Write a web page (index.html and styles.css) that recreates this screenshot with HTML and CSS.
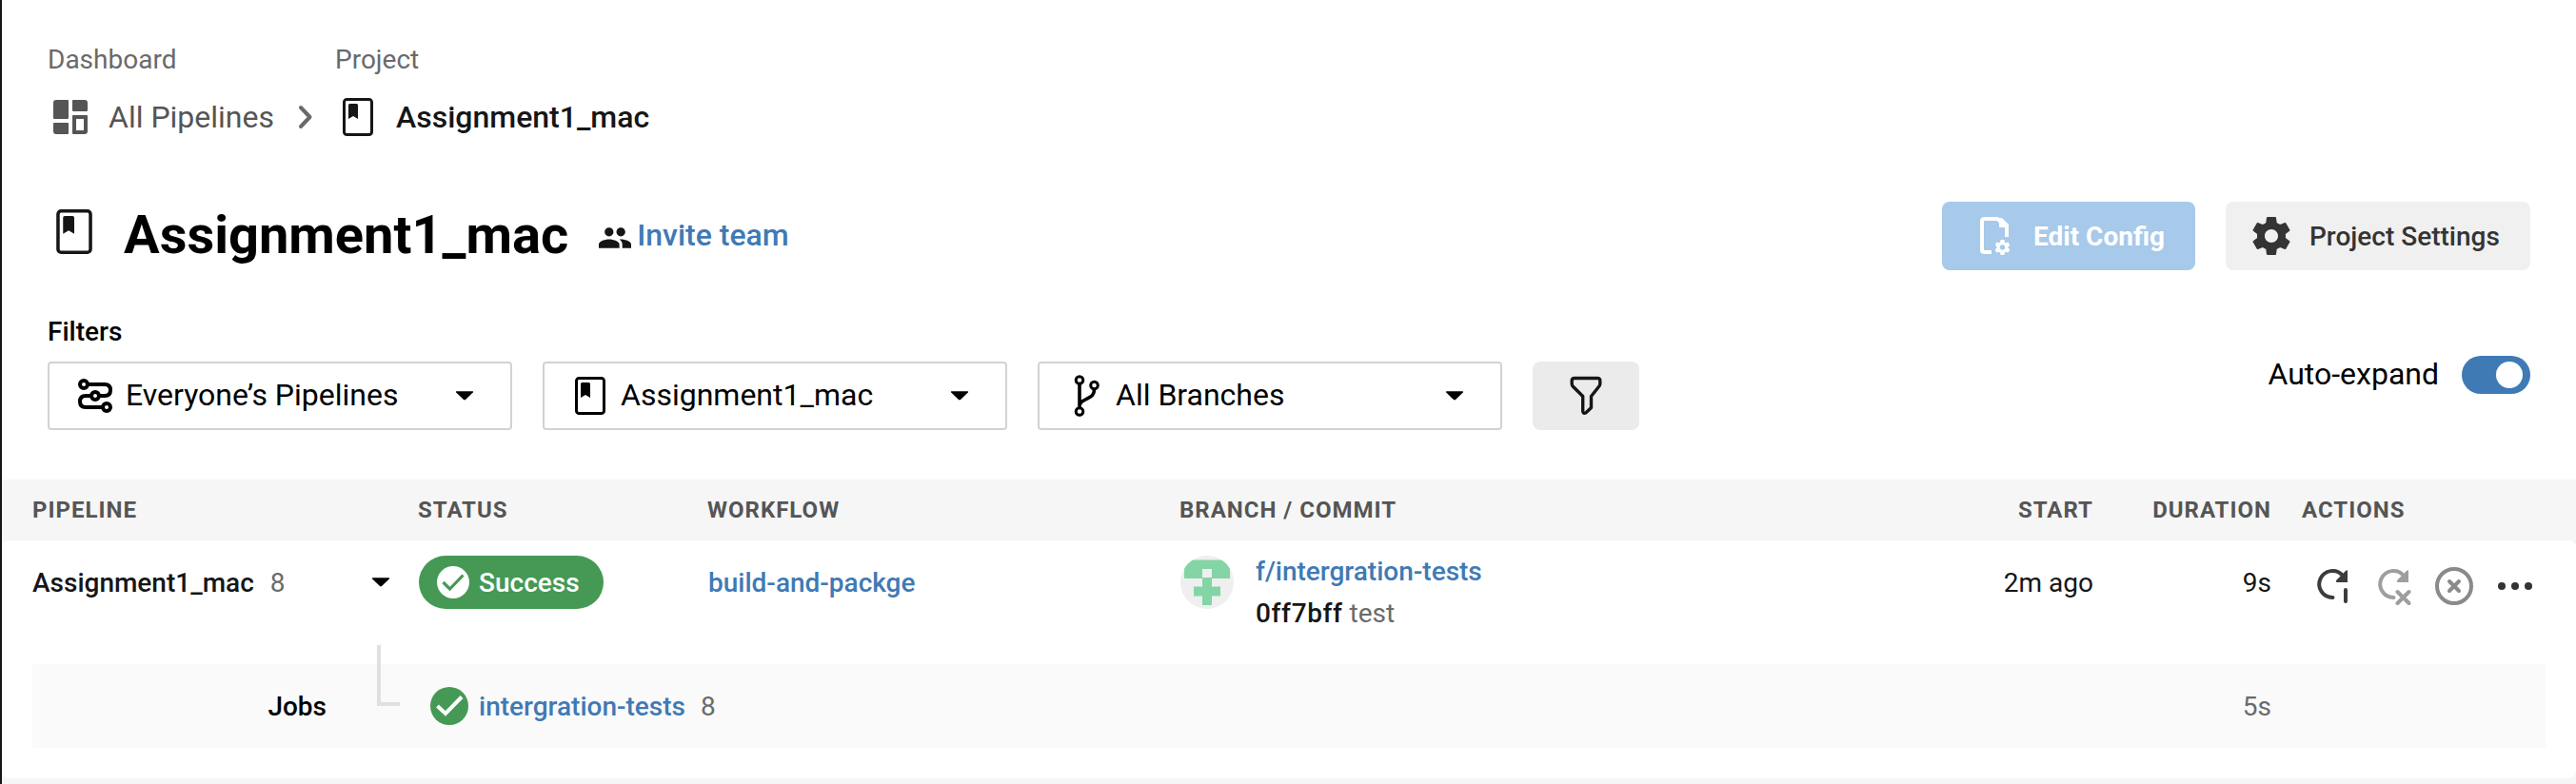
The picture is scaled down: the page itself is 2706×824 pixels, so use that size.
FILE: index.html
```html
<!DOCTYPE html>
<html lang="en">
<head>
<meta charset="utf-8">
<title>Assignment1_mac</title>
<link rel="stylesheet" href="styles.css">
</head>
<body>
<svg class="defs" width="0" height="0">
  <symbol id="book" viewBox="0 0 32 40">
    <rect x="1.5" y="1.5" width="29" height="37" rx="2.8" fill="none" stroke="currentColor" stroke-width="3"/>
    <path d="M7.5 6h7A1.5 1.5 0 0 1 16 7.500V22l-5-3-5 3V7.500A1.500 1.500 0 0 1 7.500 6z" fill="currentColor"/>
  </symbol>
  <symbol id="caret" viewBox="0 0 20 10">
    <path d="M1.700 .300h16.600q1.500 0 .500 1.200l-7.800 7.600q-1 .8-2 0L1.200 1.500Q.200.300 1.700.300z" fill="currentColor"/>
  </symbol>
</svg>
<main class="page">
  <nav class="crumbs">
    <div class="crumb crumb-root">
      <span class="crumb-label">Dashboard</span>
      <a class="crumb-link">
        <svg class="ico-grid" viewBox="0 0 36 36"><path fill="#555" d="M3 0h12q1 0 1 1v18q0 1-1 1H1q-1 0-1-1V3q0-3 3-3zM21 0h12q3 0 3 3v8q0 1-1 1H21q-1 0-1-1V1q0-1 1-1zM1 24h14q1 0 1 1v10q0 1-1 1H3q-3 0-3-3v-8q0-1 1-1z"/><path fill="#555" fill-rule="evenodd" d="M21 16h14q1 0 1 1v16q0 3-3 3H21q-1 0-1-1V17q0-1 1-1zM24 20v12h8V20z"/></svg>
        <span>All Pipelines</span>
        <svg class="ico-chev" viewBox="0 0 16 26"><path d="M3 3l9.500 10L3 23" fill="none" stroke="#6a6a6a" stroke-width="4" stroke-linecap="round" stroke-linejoin="round"/></svg>
      </a>
    </div>
    <div class="crumb">
      <span class="crumb-label">Project</span>
      <a class="crumb-link current"><svg class="ico-book"><use href="#book"/></svg><span>Assignment1_mac</span></a>
    </div>
  </nav>

  <header class="title-bar">
    <svg class="ico-title"><use href="#book"/></svg>
    <h1>Assignment1_mac</h1>
    <a class="invite">
      <svg viewBox="1 5 22 14"><path fill="#161616" d="M16 11c1.660 0 2.990-1.340 2.990-3S17.660 5 16 5s-3 1.340-3 3 1.340 3 3 3zm-8 0c1.660 0 2.990-1.340 2.990-3S9.660 5 8 5 5 6.340 5 8s1.340 3 3 3zm0 2c-2.330 0-7 1.170-7 3.500V19h14v-2.500c0-2.330-4.670-3.500-7-3.500zm8 0c-.29 0-.62.02-.97.05 1.160.84 1.970 1.970 1.970 3.450V19h6v-2.500c0-2.330-4.670-3.500-7-3.500z"/></svg>
      <span>Invite team</span>
    </a>
    <div class="title-actions">
      <button class="btn btn-primary">
        <svg class="ico-config" viewBox="0 0 40 40"><path d="M16 37H8.500Q6 37 6 34.500V4.500Q6 2 8.500 2H22l10 8v11" transform="translate(-4)" fill="none" stroke="#fff" stroke-width="4"/><path fill="#fff" d="M20 1h3l7 7v3H21q-1 0-1-1z"/>
        <svg x="15.500" y="24" width="16" height="16" viewBox="2 2 20 20"><use href="#gear"/></svg></svg>
        <span>Edit Config</span>
      </button>
      <button class="btn btn-plain">
        <svg class="ico-gear" viewBox="2 2 20 20"><path id="gear" fill="currentColor" d="M19.430 12.980c.04-.32.07-.64.07-.98s-.03-.66-.07-.98l2.110-1.650c.19-.15.24-.42.12-.64l-2-3.460c-.12-.22-.39-.3-.61-.22l-2.490 1c-.52-.4-1.080-.73-1.690-.98l-.38-2.650C14.460 2.180 14.250 2 14 2h-4c-.25 0-.46.18-.49.42l-.38 2.650c-.61.25-1.170.59-1.690.98l-2.490-1c-.23-.09-.49 0-.61.22l-2 3.460c-.13.22-.07.49.12.64l2.110 1.650c-.04.32-.07.65-.07.98s.03.66.07.98l-2.110 1.650c-.19.15-.24.42-.12.64l2 3.460c.12.22.39.3.61.22l2.490-1c.52.4 1.080.73 1.690.98l.38 2.650c.03.24.24.42.49.42h4c.25 0 .46-.18.49-.42l.38-2.650c.61-.25 1.170-.59 1.690-.98l2.490 1c.23.09.49 0 .61-.22l2-3.460c.12-.22.07-.49-.12-.64l-2.110-1.650zM12 15.500c-1.930 0-3.500-1.570-3.500-3.500s1.570-3.500 3.500-3.500 3.500 1.570 3.500 3.500-1.570 3.500-3.500 3.500z"/></svg>
        <span>Project Settings</span>
      </button>
    </div>
  </header>

  <section class="filters">
    <span class="filters-label">Filters</span>
    <div class="filters-row">
      <div class="select">
        <span class="select-icon"><svg width="36" height="36" viewBox="0 0 36 36" fill="none" stroke="#000" stroke-width="4"><path d="M10 6h18q6 0 6 6t-6 6h-6M14 18H8q-6 0-6 6t6 6h18"/><circle cx="6" cy="6" r="4"/><circle cx="18" cy="18" r="4"/><circle cx="30" cy="30" r="4"/></svg></span>
        <span class="select-text">Everyone’s Pipelines</span>
        <svg class="caret"><use href="#caret"/></svg>
      </div>
      <div class="select">
        <span class="select-icon"><svg class="ico-book"><use href="#book"/></svg></span>
        <span class="select-text">Assignment1_mac</span>
        <svg class="caret"><use href="#caret"/></svg>
      </div>
      <div class="select">
        <span class="select-icon branch-icon"><svg width="28" height="44" viewBox="0 0 28 44" fill="none" stroke="#000" stroke-width="3"><circle cx="6" cy="5.500" r="3.800"/><circle cx="21.500" cy="11" r="3.800"/><circle cx="6" cy="38.500" r="3.800"/><path stroke-width="3.600" d="M6 9v26M21.500 15c0 7-4 8-8.500 10.500-4 2-7 3.500-7 7"/></svg></span>
        <span class="select-text">All Branches</span>
        <svg class="caret"><use href="#caret"/></svg>
      </div>
      <button class="filter-btn"><svg width="34" height="42" viewBox="0 0 34 42"><path d="M5 2.500h24q3 0 2.800 3v3q-.2 1.500-1 2.500L22.500 21.500V33.500L17 38.800q-2.800 1.400-3.300-1.500V21.500L3.200 11Q2.300 10 2.200 8.500v-3Q2 2.500 5 2.500z" fill="none" stroke="#161616" stroke-width="3.400" stroke-linejoin="round"/></svg></button>
      <div class="auto"><span>Auto-expand</span><span class="toggle"></span></div>
    </div>
  </section>

  <section class="table">
    <div class="row head">
      <span>PIPELINE</span><span>STATUS</span><span>WORKFLOW</span><span>BRANCH / COMMIT</span><span class="right">START</span><span class="right">DURATION</span><span class="actions-head">ACTIONS</span>
    </div>
    <div class="card">
      <div class="row pipeline">
        <div class="cell name"><strong>Assignment1_mac</strong><span class="muted">8</span><svg class="caret"><use href="#caret"/></svg></div>
        <div class="cell"><span class="badge"><svg width="34" height="34" viewBox="0 0 34 34"><circle cx="17" cy="17" r="17" fill="#fff"/><path d="M6.500 17l7 7L27.500 9.500" fill="none" stroke="#459955" stroke-width="3.200"/></svg><span>Success</span></span></div>
        <div class="cell"><a class="link">build-and-packge</a></div>
        <div class="commit">
          <svg class="avatar" viewBox="0 0 56 56"><clipPath id="round"><circle cx="28" cy="28" r="28"/></clipPath><g clip-path="url(#round)"><path fill="#efefef" d="M0 0h56v56H0z"/><path fill="#84d5a5" fill-rule="evenodd" d="M4 4.500h48v19.500H33v8.500h9v10h-9v9.500H23v-9.500h-9v-10h9V24H4zM23 14v9h10v-9z"/></g></svg>
          <div class="commit-text"><a class="link">f/intergration-tests</a><span><b>0ff7bff</b> <span class="muted">test</span></span></div>
        </div>
        <div class="cell right">2m ago</div>
        <div class="cell right">9s</div>
        <div class="actions">
          <svg width="40" height="40" viewBox="0 0 40 40"><path d="M20.500 32A14 14 0 1 1 31 9" fill="none" stroke="#3c3c3c" stroke-width="4" stroke-linecap="round"/><path fill="#3c3c3c" d="M36 3.500V16H25q-2-.5-.5-2.500L34 4q1.500-1 2-.5zM32 24q0-2 2-2t2 2v12q0 2-2 2t-2-2z"/></svg>
          <svg width="40" height="40" viewBox="0 0 40 40"><path d="M20.500 32A14 14 0 1 1 31 9" fill="none" stroke="#9e9e9e" stroke-width="4" stroke-linecap="round"/><path fill="#9e9e9e" d="M36 3.500V16H25q-2-.5-.5-2.500L34 4q1.500-1 2-.5z"/><path d="M24.500 26l12 12M36.500 26l-12 12" stroke="#9e9e9e" stroke-width="4" stroke-linecap="round"/></svg>
          <svg width="40" height="40" viewBox="0 0 40 40" fill="none" stroke="#8a8a8a" stroke-width="4" stroke-linecap="round"><circle cx="20" cy="20" r="18"/><path d="M15 15l10 10M25 15L15 25"/></svg>
          <svg width="40" height="40" viewBox="0 0 40 40" fill="#343434"><circle cx="6" cy="20" r="4"/><circle cx="20" cy="20" r="4"/><circle cx="34" cy="20" r="4"/></svg>
        </div>
      </div>
      <div class="row jobs">
        <strong class="jobs-label">Jobs</strong>
        <span class="elbow"></span>
        <div class="job"><svg width="40" height="40" viewBox="0 0 40 40"><circle cx="20" cy="20" r="20" fill="#459955"/><path d="M7.500 20l8.500 8L33 10.500" fill="none" stroke="#fff" stroke-width="4"/></svg><a class="link">intergration-tests</a><span class="muted">8</span></div>
        <span class="job-time muted">5s</span>
      </div>
    </div>
  </section>
</main>
</body>
</html>
```
FILE: styles.css
```css
* { box-sizing: border-box; }
body { margin: 0; background: #fff; color: #161616; font: 400 28px/32px Roboto, sans-serif; }
svg { display: block; flex: none; }
.defs { position: absolute; }
button { border: 0; font: inherit; color: inherit; }
.page { height: 824px; border-left: 2px solid #161616; overflow: hidden; display: flex; flex-direction: column; }
.muted { color: #6a6a6a; font-weight: 400; }
.link { color: #3f7ab5; font-weight: 500; }
strong, b { font-weight: 500; }

.crumbs { display: flex; padding: 47px 0 0 48px; height: 180px; }
.crumb { display: flex; flex-direction: column; gap: 24px; }
.crumb-root { width: 302px; }
.crumb-label { color: #6a6a6a; }
.crumb-link { display: flex; align-items: center; height: 40px; font-size: 32px; color: #555; }
.crumb-link.current { color: #161616; font-weight: 500; padding-left: 8px; gap: 24px; }
.ico-grid { width: 36px; height: 36px; margin: 0 22px 0 6px; }
.ico-chev { width: 16px; height: 26px; margin-left: 25px; }
.ico-book { width: 32px; height: 40px; }

.title-bar { display: flex; align-items: center; height: 136px; padding: 0 48px 0 57px; }
.ico-title { width: 38px; height: 47px; margin-top: -9px; }
h1 { margin: -2px 0 0 33px; font-size: 56px; line-height: 64px; font-weight: 700; color: #000; }
.invite { display: flex; align-items: center; gap: 6px; margin: -2px 0 0 32px; color: #3f7ab5; font-size: 32px; font-weight: 500; }
.invite svg { width: 34px; height: 22px; margin-top: 5px; }
.title-actions { display: flex; gap: 32px; margin-left: auto; }
.btn { display: flex; align-items: center; height: 72px; border-radius: 8px; padding: 0; font-weight: 500; }
.btn span { padding-top: 2px; }
.btn-primary { width: 266px; padding-left: 40px; gap: 16px; background: #a7c9ea; color: #fff; font-weight: 700; }
.btn-plain { width: 320px; padding-left: 28px; gap: 20px; background: #f0f0f0; color: #343434; }
.ico-config, .ico-gear { width: 40px; height: 40px; }

.filters { height: 188px; padding: 17px 48px 0; display: flex; flex-direction: column; gap: 15px; }
.filters-label { font-weight: 500; color: #000; }
.filters-row { display: flex; gap: 32px; height: 72px; }
.select { display: flex; align-items: center; width: 488px; padding: 0 38px 0 28px; border: 2px solid #d2d2d2; border-radius: 4px; font-size: 32px; color: #000; }
.select-icon { display: flex; justify-content: center; width: 40px; margin-right: 12px; }
.branch-icon { padding-left: 4px; }
.select-text { margin-top: -2px; }
.caret { width: 20px; height: 10px; margin-left: auto; color: #000; }
.filter-btn { display: flex; align-items: center; justify-content: center; width: 112px; padding: 0; border-radius: 8px; background: #ebebeb; }
.auto { display: flex; align-items: center; gap: 24px; height: 40px; margin: -6px 0 0 auto; font-size: 32px; color: #000; }
.auto span:first-child { margin-top: -2px; }
.toggle { width: 72px; height: 40px; padding: 6px 8px; border-radius: 20px; background: #3f7ab5; display: flex; justify-content: flex-end; }
.toggle::after { content: ""; width: 28px; height: 28px; border-radius: 50%; background: #fff; }

.table { background: #f6f6f6; height: 320px; }
.row { display: grid; grid-template-columns: 406px 304px 496px 758px 201px 187px 1fr; }
.head { height: 64px; padding: 0 32px; align-items: center; font-size: 24px; font-weight: 700; letter-spacing: 1px; color: #555; }
.head span:nth-child(n+2):nth-child(-n+4) { margin-left: -1px; }
.right { text-align: right; justify-content: flex-end; }
.actions-head { padding-left: 32px; }
.card { height: 250px; padding: 16px 32px 32px; border-radius: 8px; background: #fff; }
.pipeline { height: 114px; align-items: start; }
.cell { display: flex; align-items: center; height: 56px; }
.cell > strong, .cell > .muted, .cell > .link, .badge span { padding-top: 1px; }
.pipeline > .right { padding-top: 1px; }
.name { padding-right: 30px; gap: 17px; }
.badge { display: flex; align-items: center; gap: 10px; width: 194px; height: 56px; padding-left: 19px; border-radius: 28px; background: #459955; color: #fff; font-weight: 500; }
.commit { display: flex; gap: 23px; }
.commit b { letter-spacing: .65px; }
.avatar { width: 56px; height: 56px; }
.commit-text { display: flex; flex-direction: column; gap: 12px; padding-top: 1px; }
.actions { display: flex; gap: 24px; padding: 12px 0 0 44px; }
.jobs { height: 88px; grid-template-columns: 309px 97px 1fr auto; align-items: center; background: #fafafa; }
.jobs-label { color: #000; text-align: right; padding-top: 1px; }
.elbow { width: 24px; height: 64px; margin: -64px 0 0 53px; border: solid #e0e0e0; border-width: 0 0 4px 4px; }
.job { display: flex; align-items: center; gap: 11px; padding-left: 12px; }
.job .link, .job .muted, .job-time { padding-top: 1px; }
.job .muted { margin-left: 5px; }
.job-time { margin-right: 288px; }
```
